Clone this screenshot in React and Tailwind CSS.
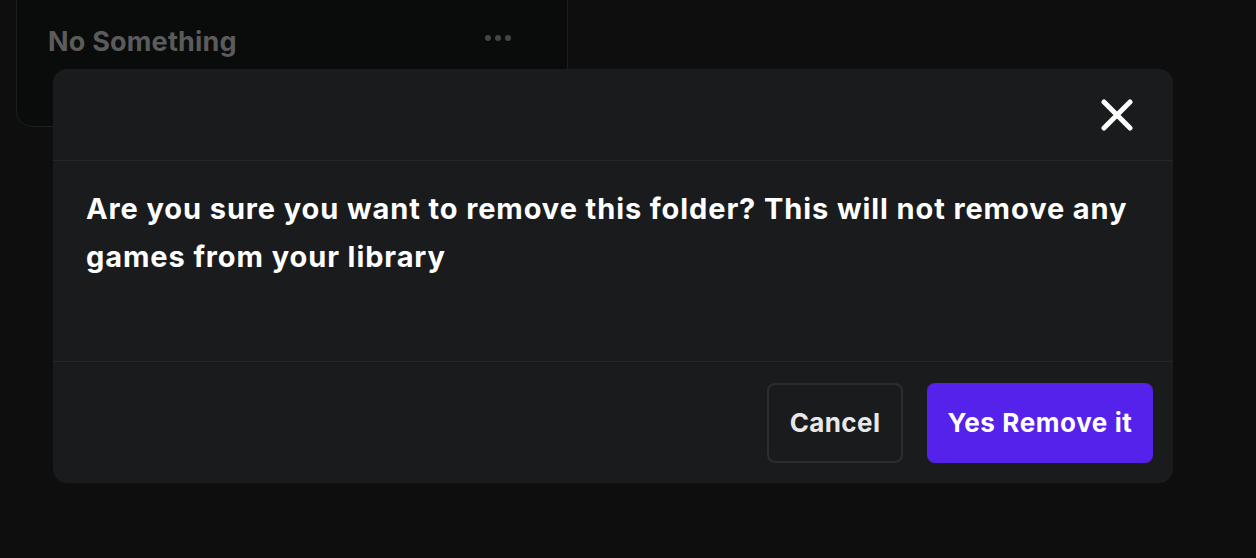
export default function App() {
  return (
    <div className="relative w-[1256px] h-[558px] bg-[#0e0e0e] overflow-hidden" style={{ fontFamily: "Inter, 'Noto Sans', sans-serif" }}>
      {/* background card */}
      <div className="absolute left-[16px] top-[-20px] w-[552px] h-[147px] rounded-[16px] border border-[#1c1d1e] bg-[#0a0b0b]">
        <div className="flex items-start justify-between pl-[31px] pr-[56px] pt-[45px]">
          <span className="text-[27px] font-bold text-[#5b5b5b] tracking-[0.2px] leading-[32px]">No Something</span>
          <div className="flex gap-[4px] pt-[9px]">
            <span className="w-[6px] h-[6px] rounded-full bg-[#444]" />
            <span className="w-[6px] h-[6px] rounded-full bg-[#444]" />
            <span className="w-[6px] h-[6px] rounded-full bg-[#444]" />
          </div>
        </div>
      </div>
      {/* modal */}
      <div className="absolute left-[53px] top-[69px] w-[1120px] h-[414px] rounded-[14px] bg-[#1a1b1d] flex flex-col">
        <div className="h-[92px] flex items-center justify-end pr-[40px] border-b border-[#26272a]">
          <svg width="32" height="32" viewBox="0 0 32 32" fill="none">
            <path d="M3 3 L29 29 M29 3 L3 29" stroke="white" strokeWidth="5" strokeLinecap="round" />
          </svg>
        </div>
        <div className="h-[201px] px-[33px] pt-[24px] border-b border-[#26272a]">
          <p className="text-[29px] font-bold text-white leading-[48px] tracking-[0.9px]">
            Are you sure you want to remove this folder? This will not remove any games from your library
          </p>
        </div>
        <div className="flex-1 flex items-center justify-end gap-[24px] pr-[20px]">
          <button className="h-[80px] w-[136px] rounded-[8px] border-2 border-[#2c2d30] text-[26px] font-bold tracking-[0.4px] text-[#e8e8e8]">Cancel</button>
          <button className="h-[80px] w-[226px] rounded-[8px] bg-[#5522ec] text-[26px] font-bold tracking-[0.6px] text-white">Yes Remove it</button>
        </div>
      </div>
    </div>
  );
}
